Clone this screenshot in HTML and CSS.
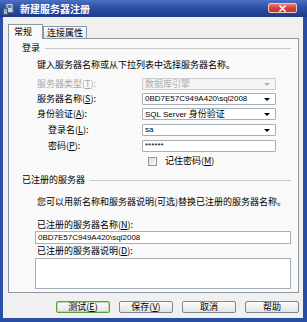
FILE: index.html
```html
<!DOCTYPE html>
<html>
<head>
<meta charset="utf-8">
<link rel="stylesheet" href="styles.css">
</head>
<body>
<div class="window">
  <div class="titlebar">
    <svg class="appicon" width="11" height="12" viewBox="0 0 11 12">
      <rect x="3" y="0.5" width="7" height="9" fill="#c9d3e6" stroke="#5a6a88"/>
      <rect x="4.5" y="2" width="4" height="3" fill="#3f7fd8"/>
      <rect x="0.5" y="5.5" width="4" height="6" fill="#a8b4c8" stroke="#4a5a78"/>
      <rect x="1.5" y="7" width="2" height="1" fill="#50a030"/>
    </svg>
    <span class="title">新建服务器注册</span>
    <div class="close">
      <svg width="9" height="7" viewBox="0 0 9 7"><path d="M1.5 0.5 L7.5 6.5 M7.5 0.5 L1.5 6.5" stroke="#fff" stroke-width="1.6"/></svg>
    </div>
  </div>
  <div class="content">
    <div class="tabs">
      <div class="tab active">常规</div>
      <div class="tab">连接属性</div>
    </div>
    <div class="panel">
      <div class="group">
        <span class="glabel">登录</span><span class="gline"></span>
      </div>
      <div class="note">键入服务器名称或从下拉列表中选择服务器名称。</div>
      <div class="rows">
        <div class="row disabled">
          <span class="lbl">服务器类型(<u>T</u>):</span>
          <div class="combo dis"><span class="val cjk">数据库引擎</span><span class="arrow"></span></div>
        </div>
        <div class="row">
          <span class="lbl">服务器名称(<u>S</u>):</span>
          <div class="combo"><span class="val">0BD7E57C949A420\sql2008</span><span class="arrow"></span></div>
        </div>
        <div class="row">
          <span class="lbl">身份验证(<u>A</u>):</span>
          <div class="combo"><span class="val">SQL Server <span class="cjk">身份验证</span></span><span class="arrow"></span></div>
        </div>
        <div class="row gap4 indent">
          <span class="lbl">登录名(<u>L</u>):</span>
          <div class="combo"><span class="val">sa</span><span class="arrow"></span></div>
        </div>
        <div class="row gap4 indent">
          <span class="lbl">密码(<u>P</u>):</span>
          <div class="combo"><span class="val">******</span></div>
        </div>
        <div class="checkrow">
          <span class="check"></span><span class="clabel">记住密码(<u>M</u>)</span>
        </div>
      </div>
      <div class="group g2">
        <span class="glabel">已注册的服务器</span><span class="gline"></span>
      </div>
      <div class="note note2">您可以用新名称和服务器说明(可选)替换已注册的服务器名称。</div>
      <div class="reg">
        <div class="rlabel">已注册的服务器名称(<u>N</u>):</div>
        <div class="input"><span class="val">0BD7E57C949A420\sql2008</span></div>
        <div class="rlabel">已注册的服务器说明(<u>D</u>):</div>
        <div class="textarea"></div>
      </div>
    </div>
    <div class="buttons">
      <div class="btn default">测试(<u>E</u>)</div>
      <div class="btn">保存(<u>V</u>)</div>
      <div class="btn">取消</div>
      <div class="btn">帮助</div>
    </div>
  </div>
</div>
</body>
</html>
```
FILE: styles.css
```css
html, body {
  margin: 0;
  padding: 0;
  background: #ffffff;
}
body {
  font-family: "Noto Sans CJK SC", "Noto Sans", sans-serif;
  font-size: 9px;
  color: #000;
}
.window {
  width: 307px;
  height: 322px;
  box-sizing: border-box;
  background: #2a4ea6;
  border-left: 3px solid #2a4ea6;
  border-right: 4px solid #2a4ea6;
  border-bottom: 4px solid #2a4ea6;
  display: flex;
  flex-direction: column;
}
.titlebar {
  height: 17px;
  margin: 0 -4px 0 -3px;
  background: linear-gradient(#4a6fc4, #2c4fa4 45%, #1d3a8c);
  display: flex;
  align-items: center;
  position: relative;
}
.appicon {
  margin-left: 3px;
  margin-top: 1px;
}
.title {
  margin-left: 6px;
  color: #fff;
  font-weight: bold;
  font-size: 10px;
  line-height: 17px;
}
.close {
  position: absolute;
  left: 268px;
  top: 3px;
  width: 29px;
  height: 10px;
  box-sizing: border-box;
  border: 1px solid #f4c8c0;
  border-radius: 2px;
  background: linear-gradient(#e9817a, #d2423c 50%, #c23530);
  display: flex;
  align-items: center;
  justify-content: center;
}
.close svg { display: block; }
.content {
  flex: 1;
  background: #f0f0f0;
  padding: 7px 4px 0 5px;
  display: flex;
  flex-direction: column;
}
.tabs {
  height: 14px;
  display: flex;
  align-items: flex-end;
  position: relative;
  z-index: 1;
}
.tab {
  height: 12px;
  line-height: 12px;
  box-sizing: border-box;
  padding: 0 4px;
  border: 1px solid #8e979f;
  border-bottom: none;
  background: linear-gradient(#fefefe, #e6e6e6);
  font-size: 9px;
  white-space: nowrap;
}
.tab.active {
  height: 15px;
  margin-bottom: -1px;
  width: 35px;
  padding-left: 5px;
  background: #f9f9f9;
  border-color: #8e979f;
  line-height: 14px;
}
.tab + .tab {
  width: 44px;
  padding-left: 3px;
  border-left: 1px solid #8e979f;
}
.panel {
  height: 255px;
  box-sizing: border-box;
  border: 1px solid #8e979f;
  background: #f9f9f9;
  padding: 3px 7px 0 13px;
  display: flex;
  flex-direction: column;
}
.group {
  height: 12px;
  display: flex;
  align-items: center;
}
.glabel {
  line-height: 12px;
  white-space: nowrap;
}
.gline {
  flex: 1;
  height: 0;
  border-top: 1px solid #c8c8c8;
  margin-left: 5px;
}
.group.g2 { margin-top: 8px; }
.note {
  margin: 5px 0 0 15px;
  height: 12px;
  line-height: 12px;
  white-space: nowrap;
}
.note2 { margin-top: 10px; }
.rows {
  margin: 7px 15px 0 15px;
  display: flex;
  flex-direction: column;
  gap: 3px;
}
.row {
  height: 12px;
  display: flex;
  align-items: center;
  justify-content: space-between;
}
.row.gap4 { margin-top: 1px; }
.row.indent .lbl { margin-left: 11px; }
.lbl {
  line-height: 12px;
  white-space: nowrap;
}
.row.disabled .lbl { color: #a6a6a6; }
.combo {
  width: 134px;
  height: 12px;
  box-sizing: border-box;
  border: 1px solid #a7afb8;
  border-radius: 1px;
  background: #fff;
  display: flex;
  align-items: center;
  justify-content: space-between;
  padding: 0 5px 0 2px;
}
.combo.dis {
  background: #f4f4f4;
  border-color: #c9cdd2;
}
.val {
  font-family: "Liberation Sans", Arial, sans-serif;
  font-size: 8px;
  line-height: 10px;
  white-space: nowrap;
}
.val .cjk, .val.cjk {
  font-family: "Noto Sans CJK SC", sans-serif;
  font-size: 9px;
}
.combo.dis .val { color: #b0b0b0; }
.arrow {
  width: 0;
  height: 0;
  border-left: 3px solid transparent;
  border-right: 3px solid transparent;
  border-top: 3px solid #000;
}
.combo.dis .arrow { border-top-color: #b4b4b4; }
.checkrow {
  height: 10px;
  margin-top: 1px;
  display: flex;
  align-items: center;
  padding-left: 111px;
}
.check {
  width: 9px;
  height: 9px;
  box-sizing: border-box;
  border: 1px solid #8f9aa8;
  background: linear-gradient(135deg, #dcdcdc, #fafafa);
}
.clabel {
  margin-left: 8px;
  line-height: 10px;
}
.reg {
  margin: 11px 0 0 13px;
  display: flex;
  flex-direction: column;
}
.rlabel {
  margin-left: 2px;
  height: 12px;
  line-height: 12px;
  white-space: nowrap;
}
.input {
  height: 13px;
  box-sizing: border-box;
  border: 1px solid #a7afb8;
  background: #fff;
  padding-left: 2px;
  display: flex;
  align-items: center;
}
.reg .rlabel + .input + .rlabel { margin-top: 1px; }
.textarea {
  margin-top: 1px;
  height: 31px;
  box-sizing: border-box;
  border: 1px solid #a7afb8;
  background: #fff;
}
.buttons {
  margin-top: 8px;
  display: flex;
  justify-content: flex-end;
  gap: 9px;
  padding-right: 0;
}
.btn {
  width: 54px;
  height: 12px;
  box-sizing: border-box;
  border: 1px solid #7d8791;
  border-radius: 2px;
  background: linear-gradient(#fbfbfb, #e4e4e4);
  text-align: center;
  line-height: 10px;
  font-size: 9px;
}
.btn.default {
  border-color: #5c9a4c;
  box-shadow: inset 0 0 0 1px #b8dca8;
}
```
